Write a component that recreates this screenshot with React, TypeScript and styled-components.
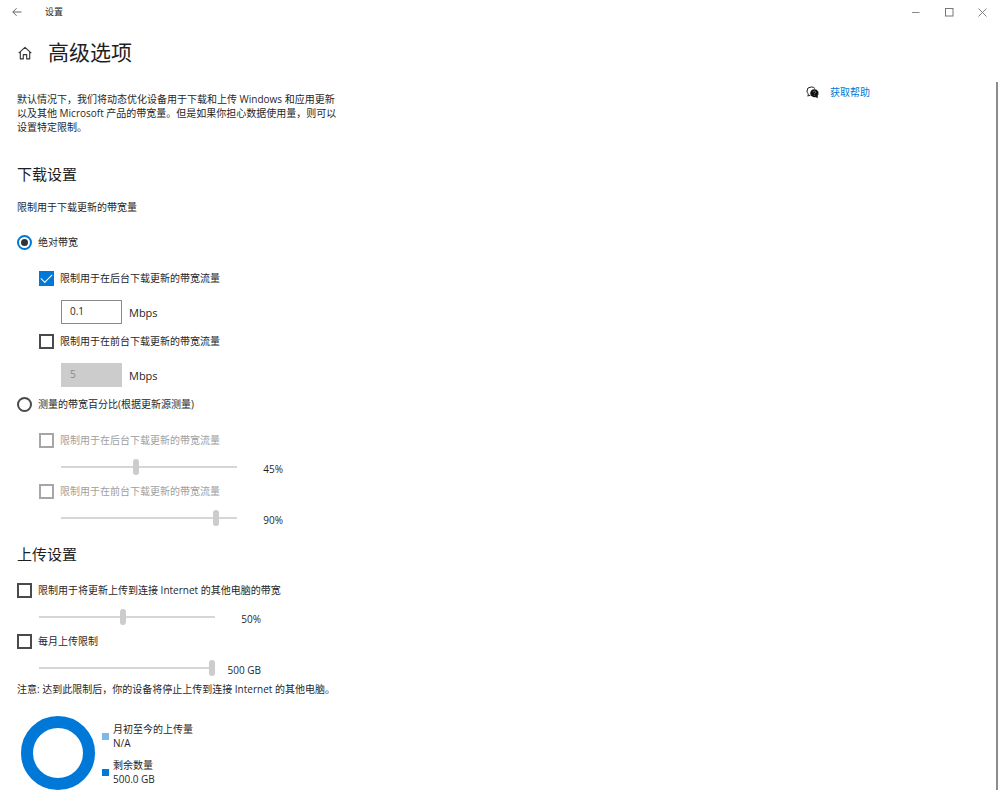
import React, { useState } from "react";
import styled, { createGlobalStyle } from "styled-components";

const blue = "#0078d7";

const GlobalStyle = createGlobalStyle`
  *, *::before, *::after { box-sizing: border-box; }
  body {
    margin: 0;
    background: #fff;
    color: #1f1f1f;
    font-family: "Open Sans", "Noto Sans CJK SC", sans-serif;
    font-size: 10px;
    line-height: 14px;
  }
  button, input { font: inherit; color: inherit; }
`;

const Window = styled.div`
  display: flex;
  flex-direction: column;
  min-height: 100vh;
`;

const TitleBar = styled.header`
  display: flex;
  align-items: center;
  height: 24px;
  padding: 0 1px 0 9px;
  font-size: 9px;
`;

const AppName = styled.span`
  flex: 1;
  padding-left: 20px;
`;

const IconButton = styled.button<{ $width: number }>`
  display: flex;
  align-items: center;
  justify-content: center;
  width: ${(p) => p.$width}px;
  height: 24px;
  padding: 0;
  border: 0;
  background: none;
`;

const PageHeader = styled.div`
  display: flex;
  align-items: center;
  gap: 14px;
  height: 58px;
  padding: 0 16px;
`;

const PageTitle = styled.h1`
  margin: 0;
  padding-bottom: 2px;
  font-size: 21px;
  line-height: 28px;
  font-weight: 400;
`;

const Body = styled.div`
  display: flex;
  align-items: stretch;
  padding: 0 2px 20px 17px;
`;

const Settings = styled.main`
  flex: 1;
  padding-top: 10px;
`;

const Side = styled.aside`
  flex: none;
  width: 190px;
  padding-top: 3px;
`;

const HelpLink = styled.a`
  display: inline-flex;
  align-items: center;
  gap: 11px;
  color: ${blue};
  text-decoration: none;
`;

const ScrollThumb = styled.div`
  flex: none;
  width: 2px;
  background: #8c8c8c;
`;

const Intro = styled.p`
  max-width: 326px;
  margin: 0 0 30px;
`;

const Heading = styled.h2<{ $after: number }>`
  margin: 0 0 ${(p) => p.$after}px;
  font-size: 15px;
  line-height: 20px;
  font-weight: 400;
`;

const Text = styled.p<{ $before?: number; $after?: number }>`
  margin: ${(p) => p.$before ?? 0}px 0 ${(p) => p.$after ?? 0}px;
`;

const UploadSection = styled.section`
  margin-top: 14px;
`;

const Nested = styled.div`
  padding: 12px 0 0 22px;
`;

const OptionLabel = styled.label<{ $dim?: boolean }>`
  display: flex;
  align-items: center;
  gap: 6px;
  height: 24px;
  color: ${(p) => (p.$dim ? "#a0a0a0" : "inherit")};
`;

const Check = styled.input.attrs({ type: "checkbox" })`
  appearance: none;
  display: grid;
  place-content: center;
  width: 15px;
  height: 15px;
  margin: 0;
  border: 2px solid #4a4a4a;
  background: #fff;

  &:disabled { border-color: #a6a6a6; }
  &:checked { border-color: ${blue}; background: ${blue}; }
  &:checked::before {
    content: "";
    width: 11px;
    height: 6px;
    margin-bottom: 3px;
    border: solid #fff;
    border-width: 0 0 1px 1px;
    transform: rotate(-45deg);
  }
`;

const Radio = styled.input.attrs({ type: "radio" })`
  appearance: none;
  display: grid;
  place-content: center;
  width: 15px;
  height: 15px;
  margin: 0;
  border: 2px solid #4a4a4a;
  border-radius: 50%;
  background: #fff;

  &:checked { border-color: ${blue}; }
  &:checked::before {
    content: "";
    width: 7px;
    height: 7px;
    border-radius: 50%;
    background: #333;
  }
`;

const AmountRow = styled.label`
  display: flex;
  align-items: center;
  gap: 7px;
  padding: 10px 0 5px 22px;
  font-size: 11px;
`;

const AmountInput = styled.input`
  width: 61px;
  height: 24px;
  padding: 0 8px 2px;
  border: 1px solid #8a8a8a;
  border-radius: 0;
  background: #fff;
  font-size: 10px;

  &:disabled {
    border-color: #ccc;
    background: #ccc;
    color: #8a8a8a;
  }
`;

const Unit = styled.span`
  padding-top: 2px;
`;

const SliderRow = styled.div`
  display: flex;
  align-items: center;
  height: 27px;
  padding: 2px 0 0 22px;
`;

const Slider = styled.input.attrs({ type: "range" })`
  appearance: none;
  width: 176px;
  height: 16px;
  margin: 0;
  background: none;

  &::-webkit-slider-runnable-track {
    height: 2px;
    background: #d6d6d6;
  }
  &::-webkit-slider-thumb {
    appearance: none;
    width: 6px;
    height: 16px;
    margin-top: -7px;
    border-radius: 3px;
    background: #ccc;
  }
`;

const SliderValue = styled.output`
  width: 46px;
  padding-top: 4px;
  text-align: right;
`;

const Usage = styled.div`
  display: flex;
  align-items: center;
  gap: 7px;
  margin: 20px 0 0 4px;
`;

const Legend = styled.ul`
  display: flex;
  flex-direction: column;
  gap: 8px;
  margin: 0;
  padding: 2px 0 0;
  list-style: none;
`;

const LegendItem = styled.li`
  display: flex;
  align-items: center;
  gap: 4px;
`;

const Swatch = styled.span<{ $color: string }>`
  width: 7px;
  height: 7px;
  background: ${(p) => p.$color};
`;

const LegendText = styled.span`
  display: flex;
  flex-direction: column;
`;

function LimitSlider({ label, value, min = 5, max = 100, unit = "%" }: {
  label: string; value: number; min?: number; max?: number; unit?: string;
}) {
  return (
    <SliderRow>
      <Slider aria-label={label} min={min} max={max} defaultValue={value} disabled />
      <SliderValue>{value}{unit}</SliderValue>
    </SliderRow>
  );
}

const background = "限制用于在后台下载更新的带宽流量";
const foreground = "限制用于在前台下载更新的带宽流量";
const upload = "限制用于将更新上传到连接 Internet 的其他电脑的带宽";

export default function App() {
  const [mode, setMode] = useState("absolute");

  return (
    <Window>
      <GlobalStyle />
      <TitleBar>
        <IconButton $width={16} aria-label="返回">
          <svg width="10" height="10" viewBox="0 0 10 10" fill="none" stroke="#555" strokeWidth="0.9">
            <path d="M9.5 5H.8M4.6 1.2L.8 5l3.800 3.800" />
          </svg>
        </IconButton>
        <AppName>设置</AppName>
        <IconButton $width={34} aria-label="最小化">
          <svg width="9" height="9" viewBox="0 0 9 9" stroke="#888"><path d="M1 4.500h7.500" /></svg>
        </IconButton>
        <IconButton $width={34} aria-label="最大化">
          <svg width="9" height="9" viewBox="0 0 9 9" fill="none" stroke="#777"><rect x=".5" y=".5" width="7.500" height="7.500" /></svg>
        </IconButton>
        <IconButton $width={33} aria-label="关闭">
          <svg width="9" height="9" viewBox="0 0 9 9" stroke="#777" strokeWidth="0.9"><path d="M.5.500l8 8M8.500.500l-8 8" /></svg>
        </IconButton>
      </TitleBar>

      <PageHeader>
        <IconButton $width={18} aria-label="主页">
          <svg width="14" height="14" viewBox="0 0 14 14" fill="none" stroke="#333" strokeWidth="1.100" strokeLinejoin="round">
            <path d="M.7 7.200L7 1.300l6.300 5.900M2.300 6v6.900h3V8.600h3.400v4.300h3V6" />
          </svg>
        </IconButton>
        <PageTitle>高级选项</PageTitle>
      </PageHeader>

      <Body>
        <Settings>
          <Intro>
            默认情况下，我们将动态优化设备用于下载和上传 Windows 和应用更新以及其他 Microsoft 产品的带宽量。但是如果你担心数据使用量，则可以设置特定限制。
          </Intro>

          <section>
            <Heading $after={16}>下载设置</Heading>
            <Text $after={16}>限制用于下载更新的带宽量</Text>

            <OptionLabel>
              <Radio name="mode" checked={mode === "absolute"} onChange={() => setMode("absolute")} />
              绝对带宽
            </OptionLabel>
            <Nested>
              <OptionLabel><Check defaultChecked />{background}</OptionLabel>
              <AmountRow>
                <AmountInput type="text" defaultValue="0.1" />
                <Unit>Mbps</Unit>
              </AmountRow>
              <OptionLabel><Check />{foreground}</OptionLabel>
              <AmountRow>
                <AmountInput type="text" defaultValue="5" disabled />
                <Unit>Mbps</Unit>
              </AmountRow>
            </Nested>

            <OptionLabel>
              <Radio name="mode" checked={mode === "percent"} onChange={() => setMode("percent")} />
              测量的带宽百分比(根据更新源测量)
            </OptionLabel>
            <Nested>
              <OptionLabel $dim><Check disabled />{background}</OptionLabel>
              <LimitSlider label={background} value={45} />
              <OptionLabel $dim><Check disabled />{foreground}</OptionLabel>
              <LimitSlider label={foreground} value={90} />
            </Nested>
          </section>

          <UploadSection>
            <Heading $after={14}>上传设置</Heading>
            <OptionLabel><Check />{upload}</OptionLabel>
            <LimitSlider label={upload} value={50} />
            <OptionLabel><Check />每月上传限制</OptionLabel>
            <LimitSlider label="每月上传限制" value={500} max={500} unit=" GB" />
            <Text $before={2}>注意: 达到此限制后，你的设备将停止上传到连接 Internet 的其他电脑。</Text>

            <Usage>
              <svg width="74" height="74" viewBox="0 0 74 74" role="img" aria-label="上传量">
                <circle cx="37" cy="37" r="31" fill="none" stroke={blue} strokeWidth="12" />
              </svg>
              <Legend>
                <LegendItem>
                  <Swatch $color="#7db8ea" />
                  <LegendText><span>月初至今的上传量</span><span>N/A</span></LegendText>
                </LegendItem>
                <LegendItem>
                  <Swatch $color={blue} />
                  <LegendText><span>剩余数量</span><span>500.0 GB</span></LegendText>
                </LegendItem>
              </Legend>
            </Usage>
          </UploadSection>
        </Settings>

        <Side>
          <HelpLink href="#help">
            <svg width="13" height="13" viewBox="0 0 13 13">
              <path d="M2.200 9.800V7.800A4 4 0 0 1 1 5a4 4 0 0 1 4-4h.8a4 4 0 0 1 3.300 1.700" fill="none" stroke="#222" />
              <path d="M1.500 10l3-.8" stroke="#222" fill="none" />
              <path d="M8.400 3.200a4 4 0 0 1 3.300 6.400v2.600l-2.200-1.200a4 4 0 1 1-1.100-7.800z" fill="#111" />
              <path d="M7.200 6.200a1.200 1.200 0 1 1 1.700 1.100c-.4.2-.5.4-.5.8M8.400 9v.8" fill="none" stroke="#aaa" strokeWidth=".6" />
            </svg>
            获取帮助
          </HelpLink>
        </Side>
        <ScrollThumb aria-hidden="true" />
      </Body>
    </Window>
  );
}
